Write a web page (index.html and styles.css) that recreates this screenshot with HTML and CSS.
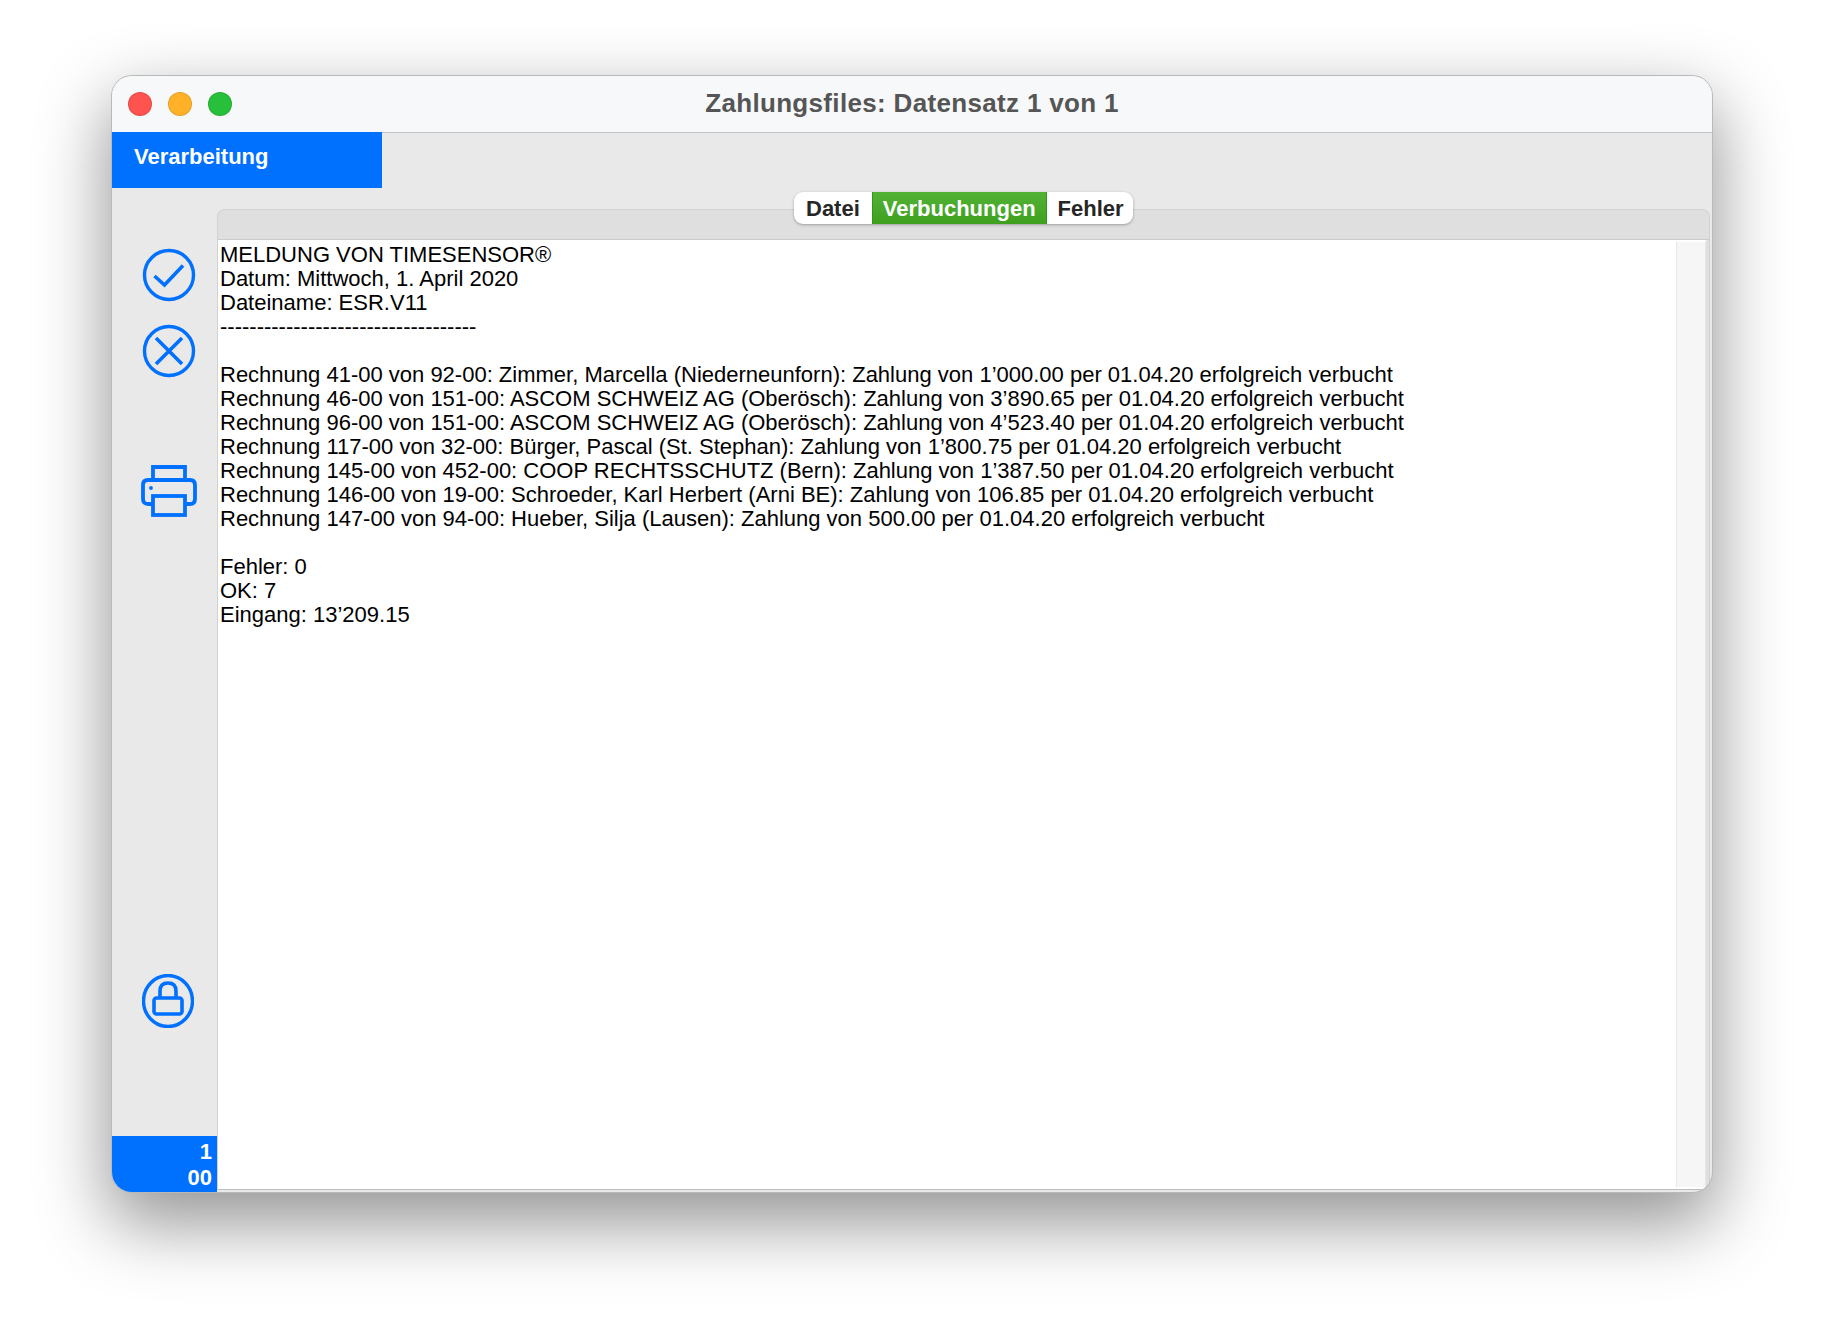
FILE: index.html
```html
<!DOCTYPE html>
<html lang="de">
<head>
<meta charset="utf-8">
<title>Zahlungsfiles</title>
<link rel="stylesheet" href="styles.css">
</head>
<body>
<div class="window">
  <header class="titlebar">
    <div class="lights">
      <span class="light red"></span>
      <span class="light amber"></span>
      <span class="light green"></span>
    </div>
    <h1 class="title">Zahlungsfiles: Datensatz 1 von 1</h1>
  </header>
  <div class="toolbar">
    <div class="section-tab">Verarbeitung</div>
  </div>
  <div class="main">
    <aside class="sidebar">
      <svg class="icon icon-check" width="54" height="54" viewBox="0 0 54 54" fill="none" stroke="#0070ff" stroke-width="3.4"><circle cx="27" cy="27" r="24.5"/><path d="M12.5 28 L22.5 37 L41 17.5" stroke-width="3.6"/></svg>
      <svg class="icon icon-x" width="54" height="54" viewBox="0 0 54 54" fill="none" stroke="#0070ff" stroke-width="3.4"><circle cx="27" cy="27" r="24.5"/><path d="M14 14 L40 40 M40 14 L14 40" stroke-width="3.6"/></svg>
      <svg class="icon icon-print" width="56" height="52" viewBox="0 0 56 52" fill="none" stroke="#0070ff" stroke-width="3.8"><path d="M12 15 V2 H44 V15"/><path d="M12 39 H7 Q2 39 2 34 V20 Q2 15 7 15 H49 Q54 15 54 20 V34 Q54 39 49 39 H44"/><rect x="12" y="31" width="32" height="19"/><circle cx="10" cy="23" r="1.900" fill="#0070ff" stroke="none"/></svg>
      <svg class="icon icon-lock" width="52" height="54" viewBox="1 1 52 54" fill="none" stroke="#0070ff" stroke-width="3.400"><ellipse cx="27" cy="28" rx="24.500" ry="25.500"/><rect x="13" y="25" width="28" height="16" rx="2.500" stroke-width="3.600"/><path d="M19 25 V18 Q19 10 27 10 Q35 10 35 18 V25" stroke-width="3.600"/></svg>
      <div class="counter"><span>1</span><span>00</span></div>
    </aside>
    <section class="panel">
      <nav class="tabs">
        <span class="tab tab-first">Datei</span>
        <span class="tab active">Verbuchungen</span>
        <span class="tab tab-last">Fehler</span>
      </nav>
      <div class="panel-head"></div>
      <div class="content">
        <pre class="log">MELDUNG VON TIMESENSOR®
Datum: Mittwoch, 1. April 2020
Dateiname: ESR.V11
-----------------------------------

Rechnung 41-00 von 92-00: Zimmer, Marcella (Niederneunforn): Zahlung von 1’000.00 per 01.04.20 erfolgreich verbucht
Rechnung 46-00 von 151-00: ASCOM SCHWEIZ AG (Oberösch): Zahlung von 3’890.65 per 01.04.20 erfolgreich verbucht
Rechnung 96-00 von 151-00: ASCOM SCHWEIZ AG (Oberösch): Zahlung von 4’523.40 per 01.04.20 erfolgreich verbucht
Rechnung 117-00 von 32-00: Bürger, Pascal (St. Stephan): Zahlung von 1’800.75 per 01.04.20 erfolgreich verbucht
Rechnung 145-00 von 452-00: COOP RECHTSSCHUTZ (Bern): Zahlung von 1’387.50 per 01.04.20 erfolgreich verbucht
Rechnung 146-00 von 19-00: Schroeder, Karl Herbert (Arni BE): Zahlung von 106.85 per 01.04.20 erfolgreich verbucht
Rechnung 147-00 von 94-00: Hueber, Silja (Lausen): Zahlung von 500.00 per 01.04.20 erfolgreich verbucht

Fehler: 0
OK: 7
Eingang: 13’209.15</pre>
        <div class="scrollbar"></div>
      </div>
    </section>
  </div>
</div>
</body>
</html>
```
FILE: styles.css
```css
html, body { margin: 0; height: 100%; background: #fff; }
body {
  padding: 76px 112px 0;
  box-sizing: border-box;
  font-family: "Liberation Sans", Arial, sans-serif;
  overflow: hidden;
}
.window {
  width: 1600px;
  height: 1116px;
  box-sizing: border-box;
  display: flex;
  flex-direction: column;
  background: #e9e9e9;
  border-radius: 20px;
  overflow: hidden;
  box-shadow: 0 0 0 1px #b9b9b9, 0 28px 70px 4px rgba(0,0,0,.42);
}
.titlebar {
  height: 57px;
  margin-bottom: -1px;
  padding-bottom: 2px;
  flex: none;
  box-sizing: border-box;
  display: grid;
  grid-template-columns: 1fr auto 1fr;
  align-items: center;
  background: #f7f8fa;
  border-bottom: 1px solid #c4c4c4;
}
.lights { display: flex; gap: 16px; padding-left: 16px; padding-top: 2px; }
.light { width: 24px; height: 24px; border-radius: 50%; box-sizing: border-box; border: 1px solid rgba(0,0,0,.1); }
.red { background: #ff5350; }
.amber { background: #ffb228; }
.green { background: #28c03a; }
.title {
  margin: 0;
  text-align: center;
  font-size: 26px;
  letter-spacing: .33px;
  font-weight: 700;
  color: #555;
}
.toolbar { height: 56px; flex: none; }
.section-tab {
  width: 270px;
  height: 56px;
  box-sizing: border-box;
  padding: 12px 0 0 22px;
  background: #0070ff;
  color: #fff;
  font-size: 22px;
  font-weight: 700;
  position: relative;
}
.main { flex: 1; display: flex; min-height: 0; padding-right: 2px; }
.sidebar {
  width: 105px;
  flex: none;
  display: flex;
  flex-direction: column;
  align-items: center;
}
.icon { flex: none; display: block; position: relative; }
.icon-check { margin: 60px 0 0 8px; }
.icon-x { margin: 22px 0 0 8px; }
.icon-print { margin: 87px 0 0 9px; }
.icon-lock { margin: 457px 0 0 6px; }
.counter {
  margin-top: auto;
  align-self: stretch;
  height: 56px;
  padding: 3px 5px 0 0;
  box-sizing: border-box;
  display: flex;
  flex-direction: column;
  align-items: flex-end;
  background: #0070ff;
  color: #fff;
  font-size: 22px;
  line-height: 26px;
  font-weight: 700;
}
.panel {
  flex: 1;
  min-width: 0;
  position: relative;
  margin-top: 21px;
  margin-bottom: 2px;
  display: flex;
  flex-direction: column;
  background: #dfdfdf;
  border: 1px solid #d2d2d2;
  border-bottom-color: #bdbdbd;
  border-radius: 8px 8px 0 0;
}
.panel-head { height: 29px; flex: none; border-bottom: 1px solid #cbcbcb; }
.tabs {
  position: absolute;
  top: -18px;
  left: 576px;
  display: flex;
  height: 32px;
  border-radius: 9px;
  overflow: hidden;
  background: #fff;
  box-shadow: 0 1px 3px rgba(0,0,0,.3);
  font-size: 22px;
  font-weight: 700;
  line-height: 33px;
  color: #262626;
}
.tab-first { padding: 0 12px; }
.tab-last { padding: 0 9px 0 11px; }
.active {
  padding: 0 10px;
  color: #fff;
  background: linear-gradient(#51b236, #3fa01f);
  border: solid #37931b;
  border-width: 0 1px;
}
.content {
  flex: 1;
  min-height: 0;
  display: flex;
  background: #fff;
  margin-right: 3px;
}
.log {
  flex: 1;
  margin: 0;
  padding: 3px 2px;
  font: 22px/24px "Liberation Sans", Arial, sans-serif;
  color: #000;
  white-space: pre;
}
.scrollbar {
  width: 30px;
  margin: 2px 0;
  box-sizing: border-box;
  background: #f6f6f6;
  border: solid #e6e6e6;
  border-width: 0 1px;
}
```
